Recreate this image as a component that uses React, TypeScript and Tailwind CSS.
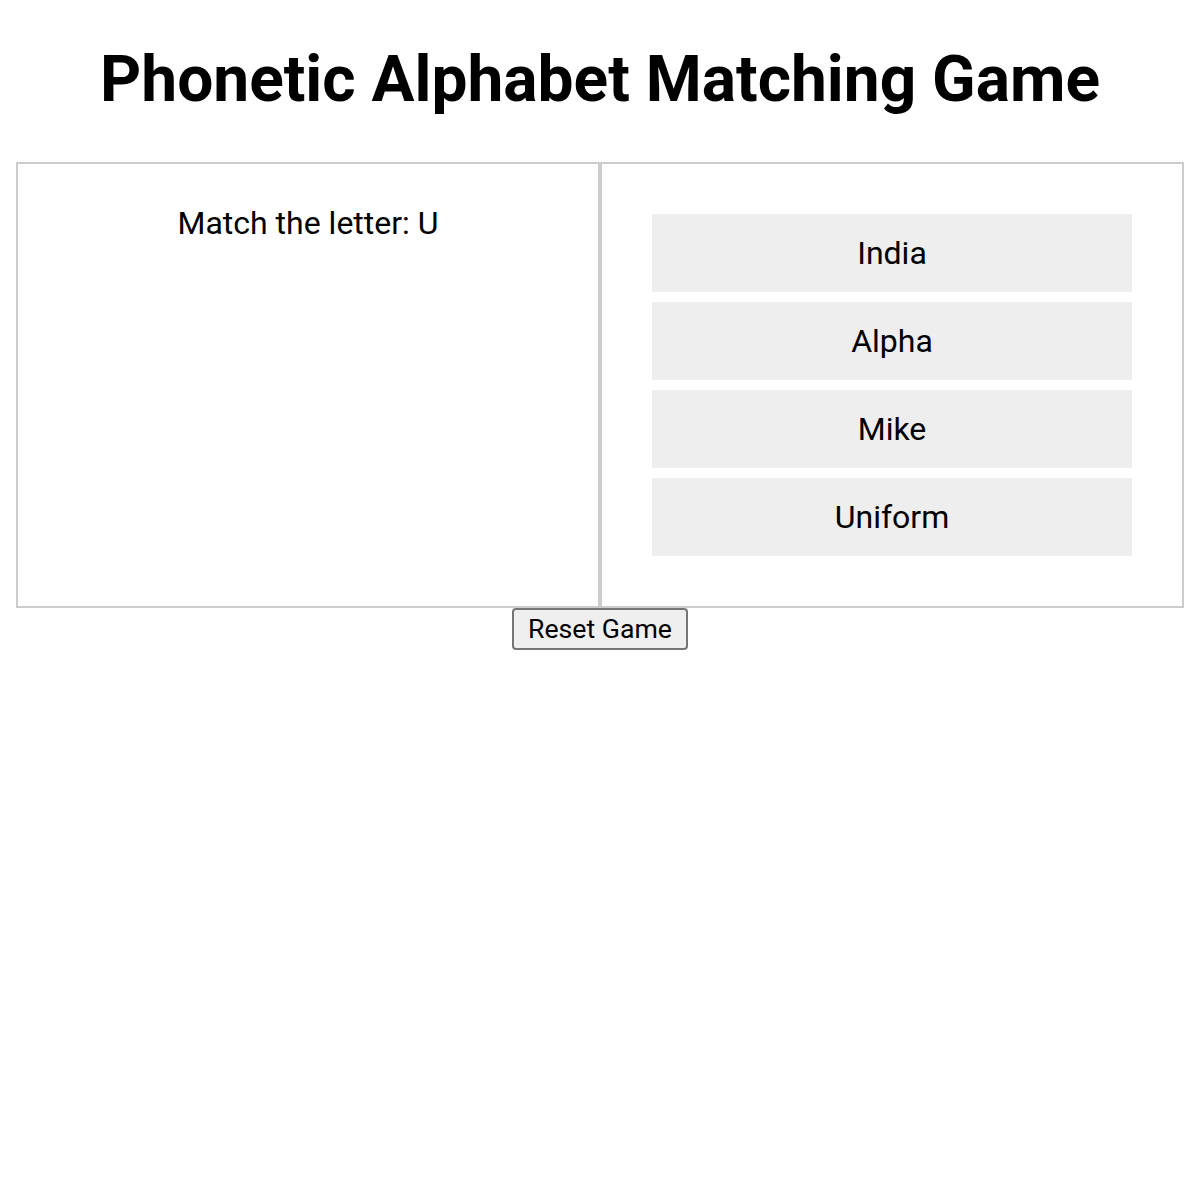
import React from "react";

export default function App() {
  const options = ["India", "Alpha", "Mike", "Uniform"];
  return (
    <div className="min-h-[1200px] bg-white font-['Roboto',sans-serif] text-black">
      <h1 className="mt-[42px] mb-[45px] text-center text-[64px] font-bold leading-[75px]">
        Phonetic Alphabet Matching Game
      </h1>
      <div className="mx-4 grid grid-cols-2">
        <div className="border-2 border-[#ccc] pt-[41px] text-center">
          <p className="text-[32px] leading-[37.5px]">Match the letter: U</p>
        </div>
        <div className="flex flex-col gap-[10px] border-2 border-[#ccc] p-[50px]">
          {options.map((o) => (
            <div
              key={o}
              className="flex h-[78px] items-center justify-center bg-[#eeeeee] pt-[2px] text-[32px] leading-[37.5px]"
            >
              {o}
            </div>
          ))}
        </div>
      </div>
      <div className="flex justify-center">
        <button className="flex h-[42px] w-[176px] items-center justify-center rounded-[4px] border-2 border-[#767676] bg-[#efefef] pt-[1px] text-[26.67px] leading-[31px] text-black">
          Reset Game
        </button>
      </div>
    </div>
  );
}
